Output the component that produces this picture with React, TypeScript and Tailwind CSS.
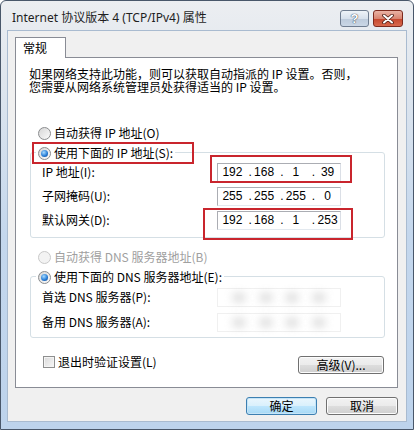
import { Fragment } from 'react'

const CJK = "font-['Noto_Sans_CJK_SC','Noto_Sans',sans-serif]"

function Radio({ checked = false, disabled = false }: { checked?: boolean; disabled?: boolean }) {
  return (
    <span
      className={`flex h-[13px] w-[13px] shrink-0 items-center justify-center rounded-full border ${
        disabled
          ? 'border-[#c9c9c9] bg-[#f3f3f3]'
          : 'border-[#8a8c8e] bg-[linear-gradient(135deg,#d6d6d6,#fbfbfb)]'
      }`}
    >
      {checked && (
        <span className="h-[7px] w-[7px] rounded-full bg-[radial-gradient(circle_at_40%_35%,#a8dcff,#2a7fd8_55%,#0b3f85)]" />
      )}
    </span>
  )
}

function IpField({ parts }: { parts: string[] }) {
  return (
    <div className="flex h-[19px] w-[124px] items-center border border-[#abadb3] border-r-[#dbdfe6] border-b-[#e3e9ef] bg-white pl-[2px] font-['Liberation_Sans',sans-serif] text-[12px] leading-none text-black">
      {parts.map((p, i) => (
        <Fragment key={i}>
          {i > 0 && <span className="w-[7px] text-right">.</span>}
          <span className="w-[25px] text-center">{p}</span>
        </Fragment>
      ))}
    </div>
  )
}

// DNS values are blurred out in the screenshot
function BlurField() {
  return (
    <div className="flex h-[19px] w-[124px] items-center justify-around border border-[#f0f0f0] bg-white px-[8px]">
      <span className="h-[9px] w-[14px] rounded-full bg-[#a9a9a9] opacity-40 blur-[4px]" />
      <span className="h-[9px] w-[14px] rounded-full bg-[#a9a9a9] opacity-40 blur-[4px]" />
      <span className="h-[9px] w-[14px] rounded-full bg-[#a9a9a9] opacity-40 blur-[4px]" />
      <span className="h-[9px] w-[14px] rounded-full bg-[#a9a9a9] opacity-40 blur-[4px]" />
    </div>
  )
}

function Btn({ label, w, primary = false }: { label: string; w: string; primary?: boolean }) {
  return (
    <button
      className={`flex h-[18px] items-center justify-center rounded-[3px] border text-[12px] leading-none text-black ${w} ${
        primary
          ? 'border-[#3c7fb1] bg-[linear-gradient(#eaf6fd,#d9f0fc_50%,#bee6fd_51%,#a7d9f5)] shadow-[inset_0_0_0_1px_#c5e4f7]'
          : 'border-[#707070] bg-[linear-gradient(#f2f2f2,#ebebeb_50%,#dddddd_51%,#cfcfcf)] shadow-[inset_0_0_0_1px_#fcfcfc]'
      }`}
    >
      {label}
    </button>
  )
}

export default function App() {
  return (
    <div className={`${CJK} flex h-[430px] w-[414px] flex-col overflow-hidden rounded-t-[6px] border border-[#49576a] bg-[linear-gradient(#eceef1,#dfe6ee_18%,#c4d7ed_55%,#bdd3ec)]`}>
      {/* title bar */}
      <div className="flex h-[29px] shrink-0 items-start pl-[11px] pr-[10px]">
        <span className="mt-[9px] font-['Noto_Sans','Noto_Sans_CJK_SC',sans-serif] text-[12px] leading-[16px] text-[#1e1e1e]">
          Internet 协议版本 4 (TCP/IPv4) 属性
        </span>
        <div className="ml-auto mt-[9px] flex gap-[4px]">
          <div className="flex h-[17px] w-[29px] items-center justify-center rounded-[3px] border border-[#6f7d90] bg-[linear-gradient(#eef3f8,#d7e1ec_50%,#bccadb_51%,#cad7e6)] font-['Liberation_Sans',sans-serif] text-[13px] font-bold leading-none text-white [text-shadow:0_0_1px_#2d3a4b,0_0_1px_#2d3a4b]">
            ?
          </div>
          <div className="flex h-[17px] w-[30px] items-center justify-center rounded-[3px] border border-[#7d2a1e] bg-[linear-gradient(#eab3a5,#d98571_50%,#c5452c_51%,#d8694d)]">
            <svg width="12" height="10" viewBox="0 0 12 10">
              <path d="M2 1.5 L10 8.5 M10 1.5 L2 8.5" stroke="#4a1a12" strokeWidth="3.6" strokeLinecap="round" />
              <path d="M2 1.5 L10 8.5 M10 1.5 L2 8.5" stroke="#ffffff" strokeWidth="2" strokeLinecap="round" />
            </svg>
          </div>
        </div>
      </div>

      {/* client area */}
      <div className="mx-[6px] flex h-[392px] shrink-0 flex-col border border-[#a9bbd0] bg-[#f0f0f0] pl-[7px] pr-[8px] pt-[6px]">
        <div className="relative z-10 -mb-px flex h-[21px] w-[51px] items-center border border-b-0 border-[#898c95] bg-white pl-[7px] text-[12px] leading-none text-black">
          常规
        </div>

        <div className="relative flex h-[331px] w-[383px] flex-col border border-[#898c95] bg-white pt-[9px] text-[12px] text-black">
          <div className="flex flex-col pl-[13px]">
            <div className="h-[13px] leading-[13px]">如果网络支持此功能，则可以获取自动指派的 IP 设置。否则，</div>
            <div className="h-[13px] leading-[13px]">您需要从网络系统管理员处获得适当的 IP 设置。</div>
          </div>

          <div className="mt-[32px] flex h-[16px] items-center gap-[3px] pl-[22px] leading-none">
            <Radio />
            <span>自动获得 IP 地址(O)</span>
          </div>

          {/* static IP group */}
          <div className="ml-[14px] mt-[11px] flex w-[355px] flex-col rounded-[3px] border border-[#d5dfe5] pb-[8px]">
            <div className="-mt-[9px] ml-[5px] flex h-[18px] items-center gap-[3px] self-start bg-white px-[2px] leading-none">
              <Radio checked />
              <span>使用下面的 IP 地址(S):</span>
            </div>
            <div className="mt-px flex flex-col gap-[6px] pl-[11px] leading-none">
              <div className="flex h-[18px] items-center">
                <span className="w-[175px]">IP 地址(I):</span>
                <IpField parts={['192', '168', '1', '39']} />
              </div>
              <div className="flex h-[18px] items-center">
                <span className="w-[175px]">子网掩码(U):</span>
                <IpField parts={['255', '255', '255', '0']} />
              </div>
              <div className="flex h-[18px] items-center">
                <span className="w-[175px]">默认网关(D):</span>
                <IpField parts={['192', '168', '1', '253']} />
              </div>
            </div>
          </div>

          <div className="mt-[11px] flex h-[16px] items-center gap-[3px] pl-[22px] leading-none text-[#a0a0a0]">
            <Radio disabled />
            <span>自动获得 DNS 服务器地址(B)</span>
          </div>

          {/* DNS group */}
          <div className="ml-[14px] mt-[11px] flex w-[355px] flex-col rounded-[3px] border border-[#d5dfe5] pb-[6px]">
            <div className="-mt-[9px] ml-[5px] flex h-[18px] items-center gap-[3px] self-start bg-white px-[2px] leading-none">
              <Radio checked />
              <span>使用下面的 DNS 服务器地址(E):</span>
            </div>
            <div className="mt-[2px] flex flex-col gap-[7px] pl-[11px] leading-none">
              <div className="flex h-[18px] items-center">
                <span className="w-[175px]">首选 DNS 服务器(P):</span>
                <BlurField />
              </div>
              <div className="flex h-[18px] items-center">
                <span className="w-[175px]">备用 DNS 服务器(A):</span>
                <BlurField />
              </div>
            </div>
          </div>

          <div className="mt-[16px] flex items-start justify-between pl-[27px] pr-[13px]">
            <div className="flex h-[16px] items-center gap-[3px] leading-none">
              <span className="h-[12px] w-[12px] border border-[#8e8f8f] bg-[linear-gradient(135deg,#d9d9d9,#f7f7f7)] shadow-[inset_0_0_0_1px_#f4f4f4]" />
              <span>退出时验证设置(L)</span>
            </div>
            <div className="mt-[2px]">
              <Btn label="高级(V)..." w="w-[86px]" />
            </div>
          </div>

          {/* red annotation boxes */}
          <div className="pointer-events-none absolute left-[16px] top-[84px] h-[22px] w-[162px] border-2 border-[#c9252d]" />
          <div className="pointer-events-none absolute left-[194px] top-[97px] h-[28px] w-[142px] border-2 border-[#c9252d]" />
          <div className="pointer-events-none absolute left-[187px] top-[150px] h-[32px] w-[150px] border-2 border-[#c9252d]" />
        </div>

        <div className="mt-[9px] flex justify-end gap-[9px]">
          <Btn label="确定" w="w-[71px]" primary />
          <Btn label="取消" w="w-[72px]" />
        </div>
      </div>
    </div>
  )
}
